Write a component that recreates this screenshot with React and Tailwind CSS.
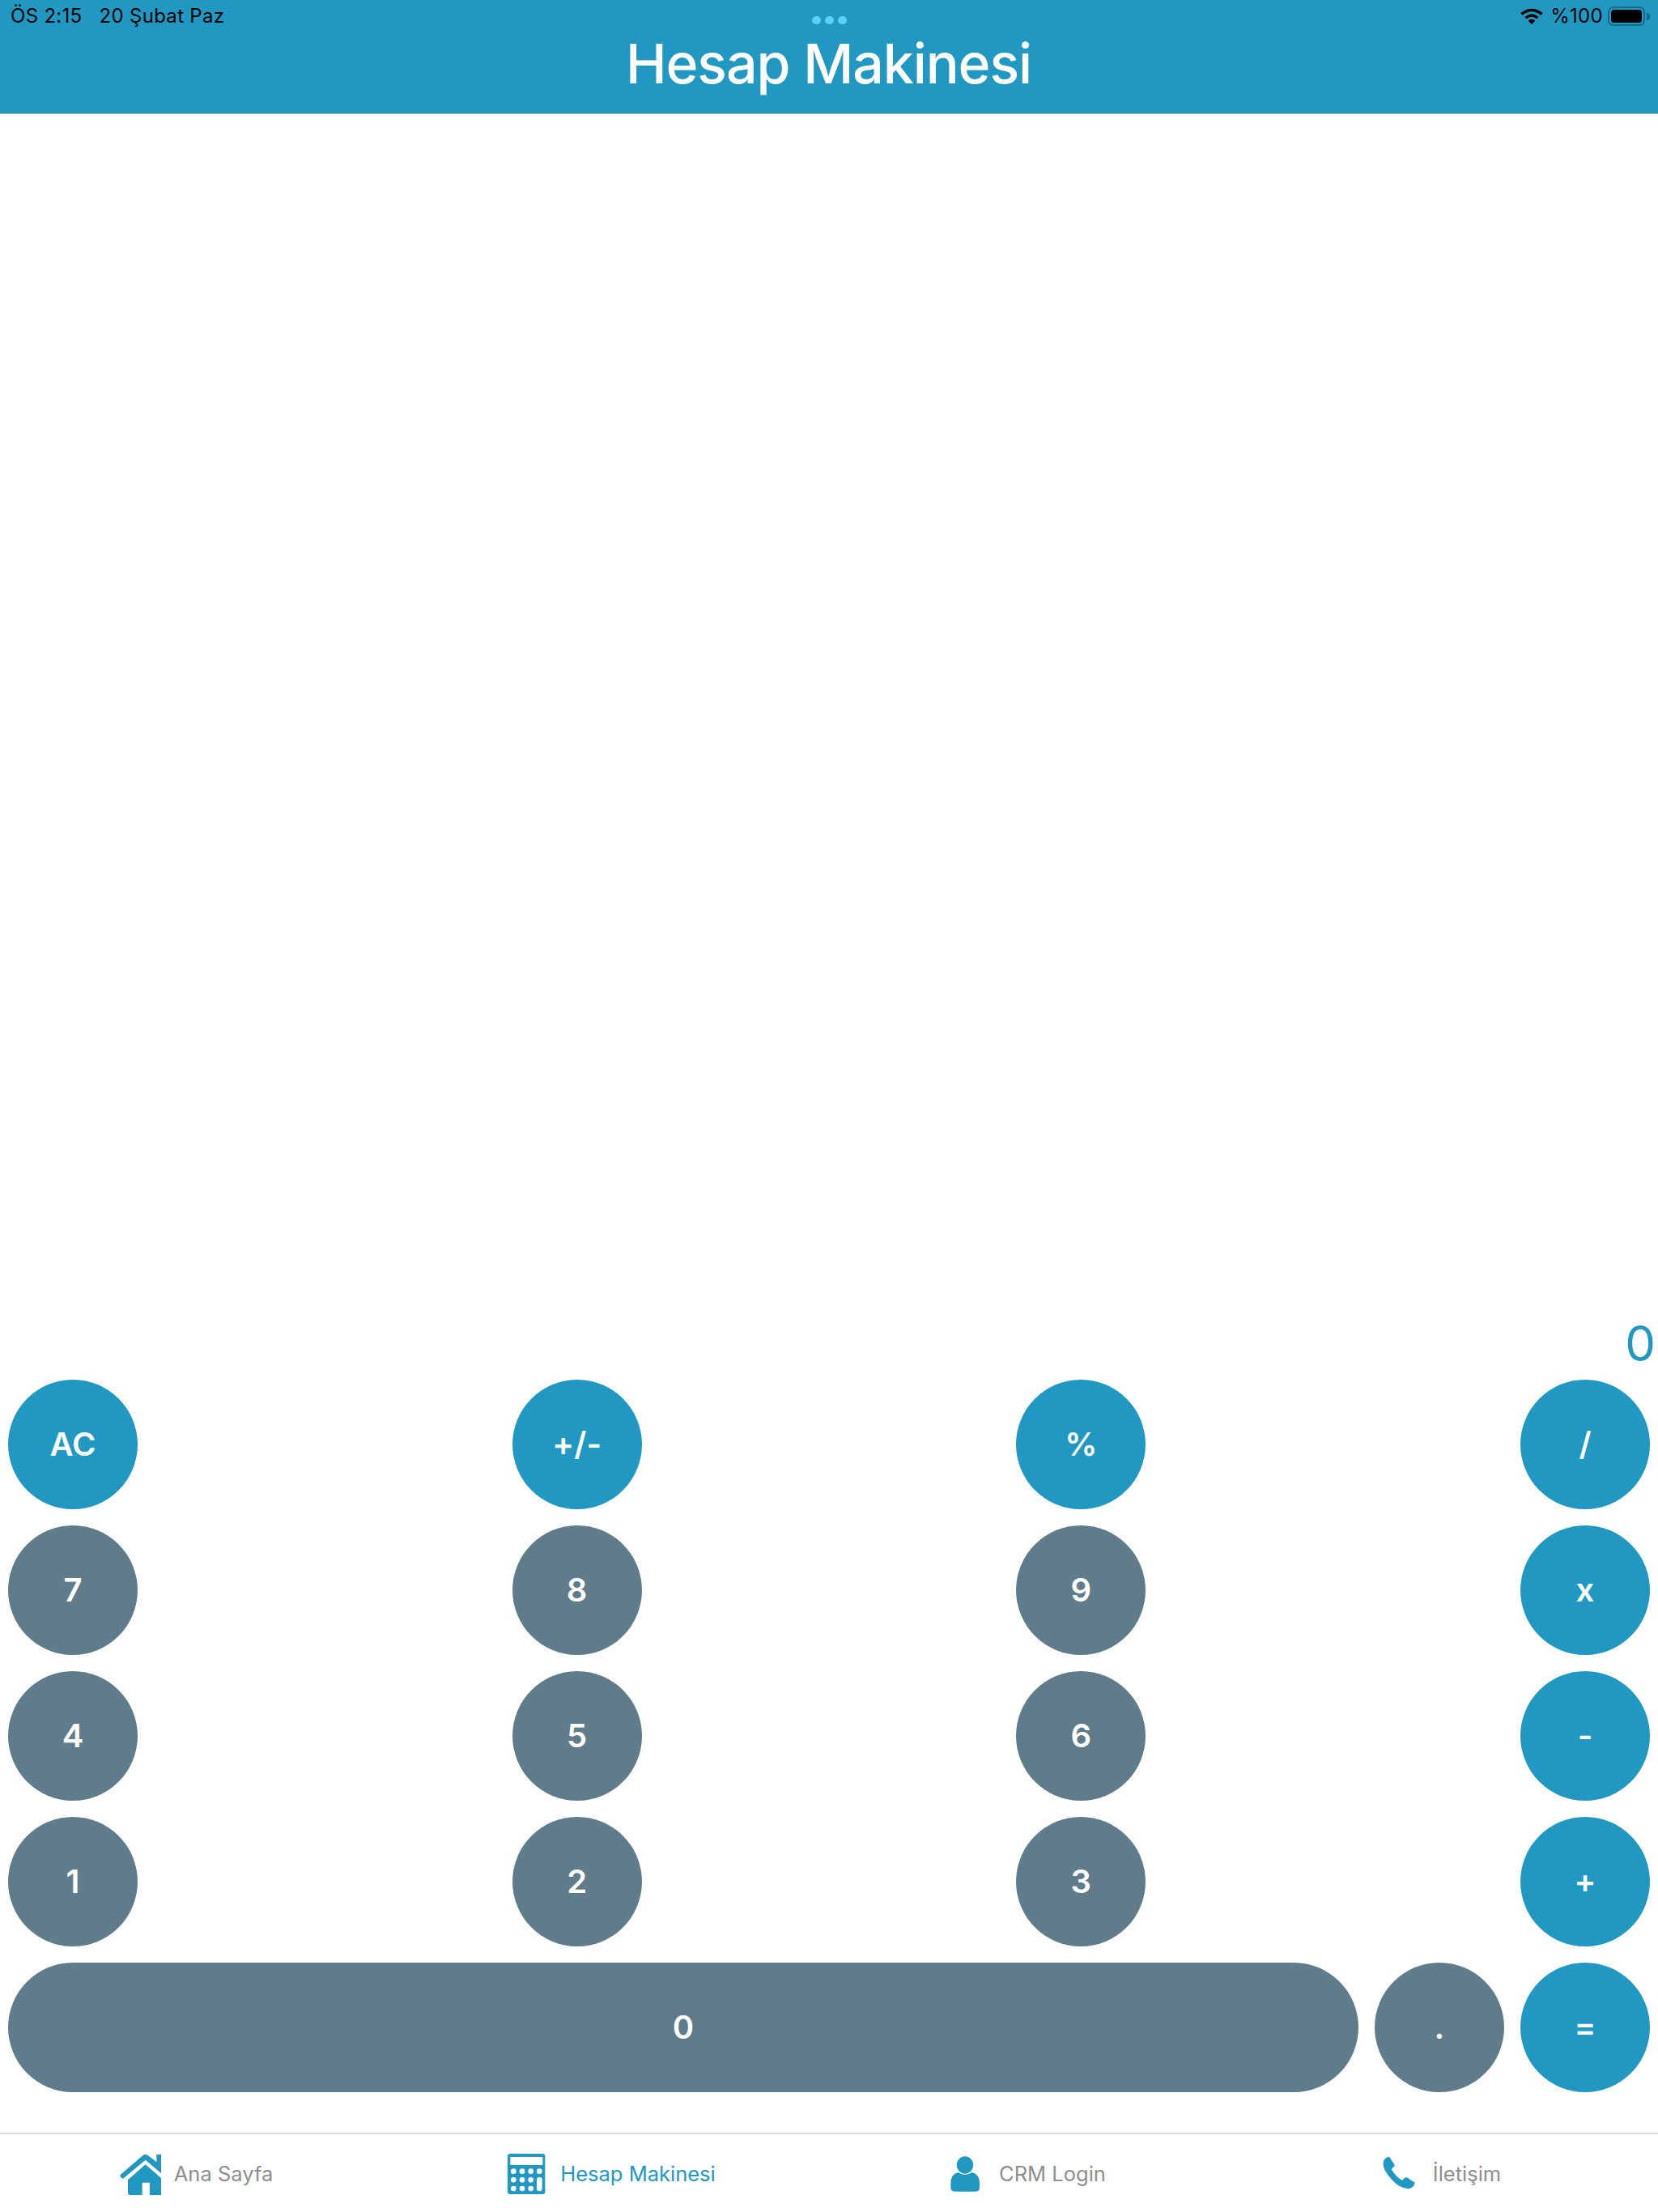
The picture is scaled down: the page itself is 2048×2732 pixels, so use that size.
import React from "react";

const rows = [
  [
    { label: "AC", blue: true },
    { label: "+/-", blue: true },
    { label: "%", blue: true },
    { label: "/", blue: true },
  ],
  [{ label: "7" }, { label: "8" }, { label: "9" }, { label: "x", blue: true }],
  [{ label: "4" }, { label: "5" }, { label: "6" }, { label: "-", blue: true }],
  [{ label: "1" }, { label: "2" }, { label: "3" }, { label: "+", blue: true }],
];

const HomeIcon = () => (
  <svg viewBox="18 3 168 168" className="w-[56px] h-[56px]" fill="currentColor">
    <path d="M30 92 L112 22 Q122 14 132 22 L163 46 V18 H180 V88 L122 38 L42 105 Q37 109 33 104 L29 99 Q27 95 30 92Z" />
    <path d="M57 112 L122 55 L180 105 V168 H138 V122 H110 V168 H65 Q57 168 57 160Z" />
  </svg>
);

const CalculatorIcon = () => (
  <svg viewBox="18 3 168 168" className="w-[56px] h-[56px]">
    <rect x="33" y="15" width="139" height="150" rx="10" fill="currentColor" />
    <rect x="43" y="27" width="120" height="30" rx="4" fill="#fff" />
    {[55, 87, 119, 151].map((x) => (
      <circle key={x} cx={x} cy="80" r="10" fill="#fff" />
    ))}
    {[55, 87, 119].map((x) => (
      <circle key={x} cx={x} cy="112" r="10" fill="#fff" />
    ))}
    {[55, 87, 119].map((x) => (
      <circle key={x} cx={x} cy="144" r="10" fill="#fff" />
    ))}
    <rect x="141" y="102" width="20" height="52" rx="10" fill="#fff" />
  </svg>
);

const PersonIcon = () => (
  <svg viewBox="14 3 168 168" className="w-[56px] h-[56px]" fill="currentColor">
    <ellipse cx="98" cy="57" rx="31" ry="32" />
    <path d="M45 125 Q45 92 72 84 Q98 102 124 84 Q152 92 152 125 V140 Q152 155 135 155 H62 Q45 155 45 140Z" />
  </svg>
);

const PhoneIcon = () => (
  <svg viewBox="14 3 168 168" className="w-[56px] h-[56px]" fill="currentColor">
    <path d="M44 36 Q50 27 62 26 L82 56 Q84 60 78 64 L70 72 Q85 100 110 114 L118 106 Q124 100 130 104 L157 122 Q156 136 140 143 Q105 148 75 115 Q38 75 40 52 Q40 42 44 36Z" />
  </svg>
);

const tabs = [
  { name: "Ana Sayfa", Icon: HomeIcon },
  { name: "Hesap Makinesi", Icon: CalculatorIcon, active: true },
  { name: "CRM Login", Icon: PersonIcon },
  { name: "İletişim", Icon: PhoneIcon },
];

const CalcButton = ({ label, blue, className = "w-[160px]" }) => (
  <button
    className={`${className} h-[160px] rounded-[80px] flex items-center justify-center text-white text-[40px] font-semibold ${
      blue ? "bg-[#2098c2]" : "bg-[#607b8a]"
    }`}
  >
    {label}
  </button>
);

export default function App() {
  return (
    <div className="font-['Inter','Noto_Sans',sans-serif] w-[2048px] h-[2732px] flex flex-col bg-white">
      {/* Header */}
      <header className="relative h-[141px] shrink-0 bg-[#2098c2] border-b border-[#b3b3b3]">
        <div className="flex justify-between items-center h-[38px] pl-[13px] pr-[10px] pt-[2px] text-[24px] text-black">
          <div className="flex gap-[21px] tracking-[0.3px]">
            <span>ÖS 2:15</span>
            <span>20 Şubat Paz</span>
          </div>
          <div className="flex items-center">
            <svg viewBox="0 0 28 20" className="w-[28px] h-[20px] mr-[9px]" fill="none" stroke="#000">
              <path d="M1.5 7.5 Q14 -2.5 26.5 7.5" strokeWidth="3.6" />
              <path d="M6.5 12.2 Q14 6 21.5 12.2" strokeWidth="3.4" />
              <path d="M14 20 L9.5 15.5 Q14 12 18.5 15.5Z" fill="#000" stroke="none" />
            </svg>
            <span className="mr-[6px] tracking-[0.3px]">%100</span>
            <div className="flex items-center">
              <div className="w-[46px] h-[24px] rounded-[7px] border-2 border-[#176a88] p-[2px]">
                <div className="w-full h-full rounded-[4px] bg-black" />
              </div>
              <div className="ml-[2px] w-[4px] h-[9px] rounded-r-full bg-[#176a88]" />
            </div>
          </div>
        </div>
        <div className="absolute top-[20px] left-[1003px] flex gap-[5px]">
          <div className="w-[11px] h-[10px] rounded-full bg-[#5ad0fa]" />
          <div className="w-[11px] h-[10px] rounded-full bg-[#5ad0fa]" />
          <div className="w-[11px] h-[10px] rounded-full bg-[#5ad0fa]" />
        </div>
        <h1 className="text-center text-white text-[68px] leading-[80px] font-medium tracking-[-1.1px] pr-[1px]">
          Hesap Makinesi
        </h1>
      </header>

      {/* Calculator */}
      <main className="flex-1 flex flex-col justify-end px-[10px] pb-[50px]">
        <div className="text-right text-[#2098c2] text-[60px] leading-[70px] -mr-[7px] mb-[10px]">0</div>
        <div className="flex flex-col gap-[20px]">
          {rows.map((row, i) => (
            <div key={i} className="flex justify-between">
              {row.map((b) => (
                <CalcButton key={b.label} {...b} />
              ))}
            </div>
          ))}
          <div className="flex gap-[20px]">
            <CalcButton label="0" className="flex-1" />
            <CalcButton label="." />
            <CalcButton label="=" blue />
          </div>
        </div>
      </main>

      {/* Tab bar */}
      <nav className="h-[98px] shrink-0 border-t-2 border-[#dcdcdc] grid grid-cols-4">
        {tabs.map(({ name, Icon, active }) => (
          <div key={name} className="flex items-center justify-center gap-[14px] pr-[30px] text-[#2098c2]">
            <Icon />
            <span className={`text-[25.5px] pt-[3px] ${active ? "text-[#2098c2]" : "text-[#8e8e8e]"}`}>{name}</span>
          </div>
        ))}
      </nav>
    </div>
  );
}
